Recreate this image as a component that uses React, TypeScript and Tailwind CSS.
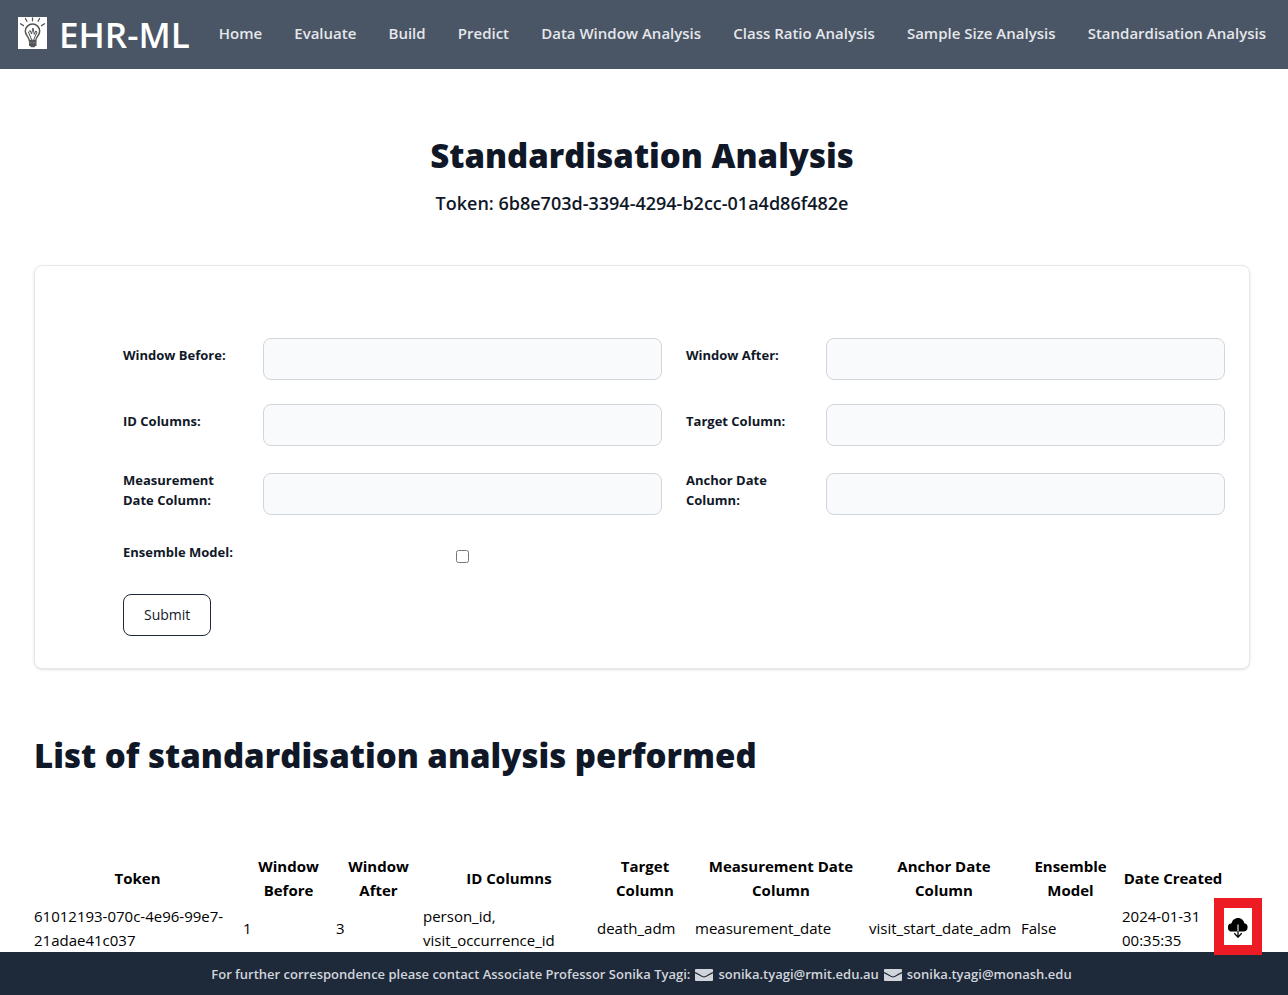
import React from 'react';

const navItems = [
  'Home',
  'Evaluate',
  'Build',
  'Predict',
  'Data Window Analysis',
  'Class Ratio Analysis',
  'Sample Size Analysis',
  'Standardisation Analysis',
];

const fields = [
  { id: 'window-before', label: 'Window Before:' },
  { id: 'window-after', label: 'Window After:' },
  { id: 'id-columns', label: 'ID Columns:' },
  { id: 'target-column', label: 'Target Column:' },
  { id: 'measurement-date', label: 'Measurement Date Column:' },
  { id: 'anchor-date', label: 'Anchor Date Column:' },
];

const columns = [
  { title: 'Token', width: 'w-[209px]' },
  { title: 'Window Before', width: 'w-[93px]' },
  { title: 'Window After', width: 'w-[87px]' },
  { title: 'ID Columns', width: 'w-[174px]' },
  { title: 'Target Column', width: 'w-[98px]' },
  { title: 'Measurement Date Column', width: 'w-[174px]' },
  { title: 'Anchor Date Column', width: 'w-[152px]' },
  { title: 'Ensemble Model', width: 'w-[101px]' },
  { title: 'Date Created', width: 'w-[104px]' },
];

const rows = [
  [
    '61012193-070c-4e96-99e7-21adae41c037',
    '1',
    '3',
    'person_id, visit_occurrence_id',
    'death_adm',
    'measurement_date',
    'visit_start_date_adm',
    'False',
    '2024-01-31 00:35:35',
  ],
];

const emails = ['sonika.tyagi@rmit.edu.au', 'sonika.tyagi@monash.edu'];

function BulbLogo() {
  return (
    <svg viewBox="0 0 29 32" className="h-8 w-[29px] shrink-0" fill="none" aria-hidden="true">
      <rect width="29" height="32" fill="#fff" />
      <g stroke="#555" strokeWidth="1.3" strokeLinecap="round">
        <path d="M14.5 .8v3M7.400 1.500l1.500 2.700M21.600 1.500l-1.500 2.700M2.500 6.800l3 1.800M26.500 6.800l-3 1.800" />
        <path d="M11.300 23.500c0-3.500-4-5-4-9.300a7.200 7.200 0 0 1 14.400 0c0 4.300-4 5.800-4 9.300z" strokeWidth="1.500" />
        <path d="M13.600 22.500l-3.200-7.500 1.800-1.500 1.300 3.500 1.500-6 1.300 6.500 1.500-3.500 1.200 1-3.200 7.500" strokeWidth="1" />
      </g>
      <path d="M11 23.500h7.500v5.500h-1.200l-.8 1.300h-3.500l-.8-1.300h-1.200z" fill="#555" />
      <path d="M11 25.800h7.500" stroke="#999" strokeWidth=".5" />
    </svg>
  );
}

function MailIcon() {
  return (
    <svg viewBox="0 0 18 12" className="mt-0.5 h-3 w-[18px] shrink-0" aria-hidden="true">
      <rect width="18" height="12" rx="1" fill="#d1d5db" />
      <path d="M0 3.500c3 1 6 4.500 9 4.500s6-3.500 9-4.500" fill="none" stroke="#1f2937" strokeWidth="1.200" />
    </svg>
  );
}

function CloudDownloadIcon() {
  return (
    <svg viewBox="0 0 20 20" className="h-5 w-5" fill="none" aria-hidden="true">
      <path
        d="M4.300 13.500A4.100 4.100 0 0 1 3.600 5.300C4.200 2.300 6.700 0 10 0c3.200 0 5.700 2.200 6.300 5.200a4.200 4.200 0 0 1-.9 8.300z"
        fill="#000"
      />
      <path d="M10 6.500v7" stroke="#aaa" strokeWidth="1.600" />
      <path d="M10 13.500v5M6.300 15.300l3.700 3.900 3.700-3.900" stroke="#000" strokeWidth="1.300" />
    </svg>
  );
}

export default function App() {
  return (
    <div className="flex min-h-screen flex-col bg-white font-['Open_Sans','Noto_Sans',sans-serif] text-black">
      <header className="flex h-[69px] items-center bg-gray-600 pr-[6px] pb-1 pl-[18px]">
        <a href="#" className="flex items-center gap-3 text-white">
          <BulbLogo />
          <span className="mt-1 text-[35px] leading-10 font-semibold">EHR-ML</span>
        </a>
        <nav className="ml-[13px] flex grow justify-between text-[15px] leading-6 font-semibold whitespace-nowrap text-gray-200">
          {navItems.map((item) => (
            <a key={item} href="#" className="px-4">
              {item}
            </a>
          ))}
        </nav>
      </header>

      <main className="grow pr-[38px] pl-[34px]">
        <div className="flex flex-col items-center pt-[67px] text-gray-900">
          <h1 className="text-[33px] leading-10 font-extrabold">Standardisation Analysis</h1>
          <p className="mt-[13px] text-lg leading-7 font-semibold">
            Token: 6b8e703d-3394-4294-b2cc-01a4d86f482e
          </p>
        </div>

        <form className="mt-12 grid grid-cols-[116px_1fr_116px_1fr] items-center gap-6 rounded-lg border border-gray-200 pt-[72px] pr-6 pb-8 pl-[88px] shadow-sm">
          {fields.map(({ id, label }) => (
            <React.Fragment key={id}>
              <label htmlFor={id} className="mb-2 text-[13px] leading-5 font-bold text-gray-900">
                {label}
              </label>
              <input
                id={id}
                type="text"
                className="h-[42px] w-full min-w-0 rounded-lg border border-gray-300 bg-gray-50 px-2.5 text-sm"
              />
            </React.Fragment>
          ))}
          <label htmlFor="ensemble" className="mb-2 text-[13px] leading-5 font-bold whitespace-nowrap text-gray-900">
            Ensemble Model:
          </label>
          <input id="ensemble" type="checkbox" className="h-[13px] w-[13px] justify-self-center" />
          <button
            type="button"
            className="col-span-4 h-[42px] justify-self-start rounded-lg border border-gray-800 px-5 text-sm leading-5 font-medium text-gray-900"
          >
            Submit
          </button>
        </form>

        <h2 className="mt-[67px] text-[33px] leading-10 font-extrabold text-gray-900">
          List of standardisation analysis performed
        </h2>

        <table className="mt-[78px] w-full table-fixed text-[15px] leading-6">
          <thead>
            <tr>
              {columns.map(({ title, width }) => (
                <th key={title} scope="col" className={`${width} pr-0.5 pb-0.5 font-bold`}>
                  {title}
                </th>
              ))}
              <th className="w-6" aria-label="Download" />
            </tr>
          </thead>
          <tbody>
            {rows.map((row) => (
              <tr key={row[0]}>
                {row.map((value, i) => (
                  <td key={columns[i].title}>{value}</td>
                ))}
                <td>
                  <button type="button" aria-label="Download" className="relative flex h-5 w-6 items-center justify-center">
                    <CloudDownloadIcon />
                    <span className="absolute -top-5 -left-3 z-20 h-[57px] w-12 border-10 border-[#ed1c24]" />
                  </button>
                </td>
              </tr>
            ))}
          </tbody>
        </table>
      </main>

      <footer className="sticky bottom-0 z-10 flex h-[43px] shrink-0 items-center justify-center gap-[5px] bg-gray-800 pr-[5px] text-[13px] leading-5 font-semibold text-gray-300">
        <span>For further correspondence please contact Associate Professor Sonika Tyagi:</span>
        {emails.map((email) => (
          <a key={email} href={`mailto:${email}`} className="flex items-center gap-[5px]">
            <MailIcon />
            {email}
          </a>
        ))}
      </footer>
    </div>
  );
}
